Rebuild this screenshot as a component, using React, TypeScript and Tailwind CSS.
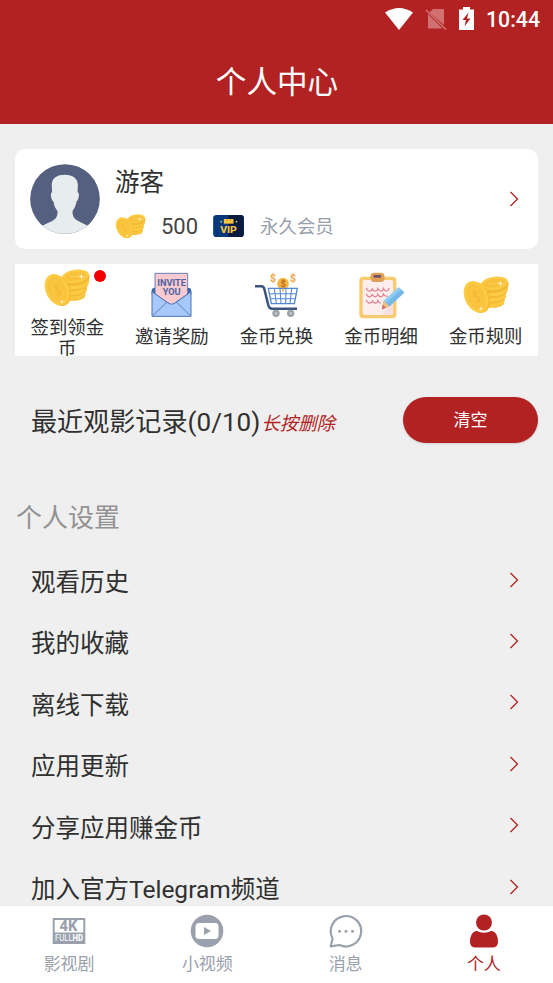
import type { ReactNode } from 'react';

type IconProps = { className?: string };

function CoinsIcon({ className }: IconProps) {
  return (
    <svg viewBox="158 48 138 114" className={className}>
      <path d="M213 80 L218 136 C226 148 274 145 281 131 L283 117 Q289 112 287 101 Q294 92 294 68Z" fill="#f4b934" />
      <path d="M222 125 C240 135 268 131 282 118 L281 130 C270 142 234 145 222 137Z" fill="#fcc840" />
      <path d="M224 111 C240 118 272 114 286 101 L285 112 C272 125 240 129 224 121Z" fill="#fdcb42" />
      <path d="M222 96 C240 103 276 99 293 80 L290 95 C278 108 240 113 224 105Z" fill="#fdcb42" />
      <ellipse cx="253" cy="75" rx="42" ry="22" transform="rotate(-8 253 75)" fill="#f3b931" />
      <ellipse cx="252" cy="70" rx="41" ry="20" transform="rotate(-8 252 70)" fill="#fccb45" />
      <ellipse cx="252" cy="70" rx="31" ry="13" transform="rotate(-8 252 70)" fill="#f8c13b" />
      <path d="M236 73 C246 64 258 76 268 67" fill="none" stroke="#fccd50" strokeWidth="4" />
      <ellipse cx="203" cy="112" rx="34" ry="49" transform="rotate(-24 203 112)" fill="#f6bd35" />
      <ellipse cx="197" cy="110" rx="34" ry="49" transform="rotate(-24 197 110)" fill="#fdca43" />
      <ellipse cx="197" cy="110" rx="25" ry="38" transform="rotate(-24 197 110)" fill="#f6bf3a" />
      <ellipse cx="198" cy="111" rx="22" ry="34" transform="rotate(-24 198 111)" fill="#fac43e" />
      <path d="M205 99 C195 90 185 99 192 106 C198 112 207 109 208 118 C208 127 200 128 194 121 M190 94 L207 127" fill="none" stroke="#f3b836" strokeWidth="3" />
      <path d="M270 61 L272 69 L280 71 L272 73 L270 81 L268 73 L260 71 L268 69Z" fill="#fff4c8" />
      <path d="M212 139 L214 144 L219 146 L214 148 L212 153 L210 148 L205 146 L210 144Z" fill="#fff0b4" />
    </svg>
  );
}

function InviteIcon({ className }: IconProps) {
  return (
    <svg viewBox="35 38 123 136" className={className}>
      <path d="M37 94 C37 84 42 85 50 84 H143 C151 85 156 84 156 94 V105 H37Z" fill="#3d66a8" />
      <path d="M47 41 H145 V103 L97 137 L47 103Z" fill="#fbc9d0" stroke="#4a6fae" strokeWidth="2.5" />
      <path d="M38 96 L82 127 Q97 140 112 127 L155 96 V170 H38Z" fill="#a6c8fa" stroke="#4a73b6" strokeWidth="3" />
      <path d="M39 169 L83 127 M154 169 L111 127" stroke="#4a73b6" strokeWidth="2.5" />
      <text x="97" y="78" textAnchor="middle" textLength="86" lengthAdjust="spacingAndGlyphs" fontFamily="Roboto, sans-serif" fontSize="25" fontWeight="700" fill="#4b64a2">INVITE</text>
      <text x="97" y="106" textAnchor="middle" textLength="54" lengthAdjust="spacingAndGlyphs" fontFamily="Roboto, sans-serif" fontSize="25" fontWeight="700" fill="#4b64a2">YOU</text>
    </svg>
  );
}

function CartIcon({ className }: IconProps) {
  return (
    <svg viewBox="59 36 135 138" className={className}>
      <g fontFamily="Roboto, sans-serif" fontWeight="900" textAnchor="middle">
        <text x="116" y="65" fontSize="31" fill="#efaa50">$</text>
        <text x="176" y="65" fontSize="31" fill="#efaa50">$</text>
        <circle cx="146" cy="71" r="17.5" fill="#f7b53f" />
        <text x="146" y="81" fontSize="27" fill="#bf6b2b">$</text>
      </g>
      <g fill="none" stroke="#5387d2" strokeWidth="4">
        <path d="M102 85 H189 L180 131 H111Z" />
        <path d="M105 101 H186 M108 116 H183 M120 85 L126 131 M137 85 L140 131 M155 85 L154 131 M172 85 L167 131" strokeWidth="3.2" />
      </g>
      <path d="M146 86 V95" stroke="#efaa50" strokeWidth="4" />
      <path d="M62 79 H81 Q88 79 90 87 L102 136 Q105 146 113 146 H188" fill="none" stroke="#3d5480" strokeWidth="7.5" />
      <circle cx="125" cy="160" r="11" fill="#9ca0a8" />
      <circle cx="169" cy="160" r="11" fill="#9ca0a8" />
      <circle cx="125" cy="160" r="4.5" fill="#bfc2c8" />
      <circle cx="169" cy="160" r="4.5" fill="#bfc2c8" />
    </svg>
  );
}

function ClipboardIcon({ className }: IconProps) {
  return (
    <svg viewBox="367 35 140 142" className={className}>
      <rect x="370" y="49" width="112" height="126" rx="12" fill="#f7ca6d" />
      <rect x="380" y="59" width="92" height="106" rx="6" fill="#fdeeed" />
      <path d="M472 120 V159 Q472 165 466 165 H438Z" fill="#f9dfe0" />
      <rect x="404" y="37" width="42" height="28" rx="11" fill="#dda055" />
      <rect x="413" y="44" width="23" height="8" rx="3" fill="#75506a" />
      <g fill="none" stroke="#e07b8b" strokeWidth="3.4">
        <path d="M391 83 Q395 94 402 93 Q408 92 409 85 Q412 93 419 93 Q425 92 426 85 Q430 93 436 93 Q442 92 443 85 Q447 93 453 93 Q459 91 460 83" />
        <path d="M391 101 Q395 111 402 110 Q408 109 409 102 Q412 110 419 110 Q425 109 426 102 Q430 110 436 110 Q442 109 443 102 Q447 110 456 108" />
        <path d="M391 120 Q395 130 402 129 Q408 128 409 121 Q412 129 419 129 Q425 128 426 121 Q430 129 435 129" />
      </g>
      <path d="M438 148 L443 122 L489 80 L506 97 L461 139Z" fill="#8ccdf5" />
      <path d="M451 129 L496 88 L506 97 L461 139Z" fill="#76b7e8" />
      <path d="M438 148 L443 122 L461 139Z" fill="#f1c277" />
      <path d="M438 148 L441 134 L451 143Z" fill="#da686d" />
    </svg>
  );
}

function AvatarIcon({ className }: IconProps) {
  return (
    <svg viewBox="47 57 209 209" className={className}>
      <clipPath id="avatar-clip">
        <circle cx="151.5" cy="161.5" r="104" />
      </clipPath>
      <g clipPath="url(#avatar-clip)">
        <rect x="47" y="57" width="209" height="209" fill="#555f80" />
        <path d="M151 89 C127 89 111 99 112 122 L113 141 C106 141 110 166 117 169 C119 183 124 191 129 197 C130 222 120 224 84 241 L60 270 H245 L219 241 C184 225 173 221 174 197 C180 190 184 181 186 169 C193 165 196 141 189 141 L190 122 C190 99 175 89 151 89Z" fill="#e7eced" />
      </g>
    </svg>
  );
}

function VipIcon({ className }: IconProps) {
  return (
    <svg viewBox="0 0 92 66" className={className}>
      <rect width="92" height="66" rx="10" fill="#07387a" />
      <path d="M46 0 H82 Q92 0 92 10 V56 Q92 66 82 66 H46Z" fill="#061b3e" />
      <rect x="32" y="12" width="29" height="14" fill="#f9c440" />
      <path d="M42 12 V18 M52 12 V18" stroke="#bb7f21" strokeWidth="2" />
      <circle cx="24" cy="20" r="2.5" fill="#f4d27c" />
      <circle cx="70" cy="20" r="2.5" fill="#f4d27c" />
      <text x="46" y="54" textAnchor="middle" textLength="50" lengthAdjust="spacingAndGlyphs" fontFamily="Roboto, sans-serif" fontSize="28" fontWeight="800" fill="#f8c447">VIP</text>
    </svg>
  );
}

function Chevron() {
  return (
    <svg viewBox="0 0 10 16" className="h-4 w-2.5 shrink-0">
      <path d="M1.5 1 L8.5 8 L1.5 15" fill="none" stroke="#b22222" strokeWidth="1.3" />
    </svg>
  );
}

function StatusBar() {
  return (
    <div className="flex h-[37px] items-center justify-end pr-[13px] text-white">
      <svg viewBox="0 0 28 22" className="mr-3 h-[22px] w-7">
        <path d="M0 4.5 Q14 -4.5 28 4.5 L14 22Z" fill="currentColor" />
      </svg>
      <svg viewBox="0 0 22 22" className="mr-3 h-[22px] w-[22px]">
        <path d="M8 1 H18 Q19 1 19 2 V17 L4.5 4.5Z M3 6 L17.5 20.5 H4 Q3 20.5 3 19.5Z" fill="#d07070" />
        <path d="M1 2 L21 21.5" stroke="#d07070" strokeWidth="1.6" />
      </svg>
      <svg viewBox="0 0 15 23" className="mr-3 h-[23px] w-[15px]">
        <path d="M4 0 H11 V2.5 H15 V23 H0 V2.5 H4Z" fill="currentColor" />
        <path d="M9.5 5.5 L3.5 13 H7 L5.5 19.5 L11.5 11.5 H8Z" fill="#b22222" />
      </svg>
      <span className="pt-0.5 text-[21.3px] font-medium leading-none">10:44</span>
    </div>
  );
}

const shortcuts = [
  { label: '签到领金币', icon: <CoinsIcon className="mt-px h-[38px] w-[46px]" />, badge: true },
  { label: '邀请奖励', icon: <InviteIcon className="h-[46px] w-[41px]" /> },
  { label: '金币兑换', icon: <CartIcon className="h-[46px] w-[45px]" /> },
  { label: '金币明细', icon: <ClipboardIcon className="h-[47px] w-[47px]" /> },
  { label: '金币规则', icon: <CoinsIcon className="h-[38px] w-[46px]" /> },
];

const settings = ['观看历史', '我的收藏', '离线下载', '应用更新', '分享应用赚金币', '加入官方Telegram频道'];

const tabs: { label: string; icon: ReactNode; active?: boolean }[] = [
  {
    label: '影视剧',
    icon: (
      <svg viewBox="0 0 34 34" className="h-[34px] w-[34px]">
        <path d="M0.7 4 H33.3 V30 H0.7Z M2.7 6 V18.5 H31.3 V6Z" fill="currentColor" fillRule="evenodd" />
        <text x="16.5" y="17" textAnchor="middle" textLength="18" lengthAdjust="spacingAndGlyphs" fontFamily="Roboto, sans-serif" fontSize="14" fontWeight="800" fill="currentColor">4K</text>
        <text x="17" y="27.2" textAnchor="middle" textLength="28" lengthAdjust="spacingAndGlyphs" fontFamily="Roboto, sans-serif" fontSize="8.4" fill="white">
          FULL<tspan fontWeight="800">HD</tspan>
        </text>
      </svg>
    ),
  },
  {
    label: '小视频',
    icon: (
      <svg viewBox="0 0 34 34" className="h-[34px] w-[34px]">
        <circle cx="17" cy="17" r="16.3" fill="currentColor" />
        <rect x="5.5" y="9" width="23" height="16" rx="3.5" fill="white" />
        <path d="M14 13 L21 17 L14 21Z" fill="currentColor" />
      </svg>
    ),
  },
  {
    label: '消息',
    icon: (
      <svg viewBox="0 0 34 34" className="h-[34px] w-[34px]">
        <path d="M3.6 24.5 A15.2 15.2 0 1 1 10.5 31 L1.6 32.4Z" fill="none" stroke="currentColor" strokeWidth="2.2" strokeLinejoin="round" />
        <circle cx="10.5" cy="17.2" r="1.5" fill="currentColor" />
        <circle cx="17" cy="17.2" r="1.5" fill="currentColor" />
        <circle cx="23.5" cy="17.2" r="1.5" fill="currentColor" />
      </svg>
    ),
  },
  {
    label: '个人',
    active: true,
    icon: (
      <svg viewBox="0 0 34 34" className="h-[34px] w-[34px]">
        <circle cx="17" cy="8.5" r="8" fill="currentColor" />
        <path d="M9.5 16.7 Q17 21 24.5 16.7 Q31 18 31 28 Q31 33.5 25 33.5 H9 Q3 33.5 3 28 Q3 18 9.5 16.7Z" fill="currentColor" />
      </svg>
    ),
  },
];

function ProfileCard() {
  return (
    <div className="flex h-[100px] items-center rounded-[10px] bg-white pl-[15px] pr-[19px]">
      <AvatarIcon className="h-[70px] w-[70px] shrink-0" />
      <div className="ml-[15px] flex flex-1 flex-col pt-[9px]">
        <div className="text-[24.5px] leading-[34px]">游客</div>
        <div className="mt-[11px] flex h-[30px] items-center">
          <CoinsIcon className="h-[25px] w-[31px]" />
          <span className="ml-[15px] text-[22px] text-[#444]">500</span>
          <VipIcon className="ml-[15px] h-[22px] w-[31px]" />
          <span className="ml-4 pt-px text-[18.4px] text-[#989fac]">永久会员</span>
        </div>
      </div>
      <Chevron />
    </div>
  );
}

function ShortcutGrid() {
  return (
    <div className="mt-[15px] grid h-[92px] grid-cols-5 overflow-hidden bg-white">
      {shortcuts.map((item) => (
        <div key={item.label} className={`flex flex-col items-center ${item.badge ? '' : 'pt-2'}`}>
          <div className="relative flex h-[46px] items-center">
            {item.icon}
            {item.badge && <span className="absolute -right-4 top-1.5 h-3 w-3 rounded-full bg-[#f20000]" />}
          </div>
          <div className={`w-[78px] text-center text-[18.4px] ${item.badge ? 'mt-[7px] leading-[21px]' : 'mt-2 leading-[21px]'}`}>
            {item.label}
          </div>
        </div>
      ))}
    </div>
  );
}

export default function App() {
  return (
    <div className="flex h-[983px] w-full flex-col overflow-hidden bg-[#efefef] font-[Roboto,'Noto_Sans_CJK_SC',sans-serif] text-[#303030]">
      <header className="h-[124px] shrink-0 bg-[#b22222] text-white">
        <StatusBar />
        <h1 className="flex h-[87px] items-center justify-center pl-px pt-1.5 text-[30.6px] leading-none">个人中心</h1>
      </header>

      <main className="min-h-0 flex-1 overflow-hidden px-[15px] pt-[25px]">
        <ProfileCard />
        <ShortcutGrid />

        <div className="mt-[41px] flex h-[46px] items-center pl-4">
          <span className="pt-1 text-[26.1px] leading-none">最近观影记录(0/10)</span>
          <em className="ml-px pt-2 text-[18.4px] leading-none text-[#b22222]">长按删除</em>
          <button className="ml-auto h-[46px] w-[135px] rounded-full bg-[#b22222] pt-0.5 text-[17px] text-white shadow">清空</button>
        </div>

        <h2 className="mt-[54px] flex h-10 items-center pl-px pt-0.5 text-[26px] leading-none text-[#929292]">个人设置</h2>

        <ul className="mt-3">
          {settings.map((label) => (
            <li key={label} className="flex h-[61.4px] items-center justify-between pl-4 pr-[19px] text-[24.5px] leading-none">
              <span className="pt-[7px]">{label}</span>
              <Chevron />
            </li>
          ))}
        </ul>
      </main>

      <nav className="grid h-[77px] shrink-0 grid-cols-4 bg-white">
        {tabs.map((tab) => (
          <div
            key={tab.label}
            className={`flex flex-col items-center pt-2 ${tab.active ? 'text-[#b22222]' : 'text-[#9aa1ad]'}`}
          >
            {tab.icon}
            <span className="mt-1 text-[17px] leading-6">{tab.label}</span>
          </div>
        ))}
      </nav>
    </div>
  );
}
